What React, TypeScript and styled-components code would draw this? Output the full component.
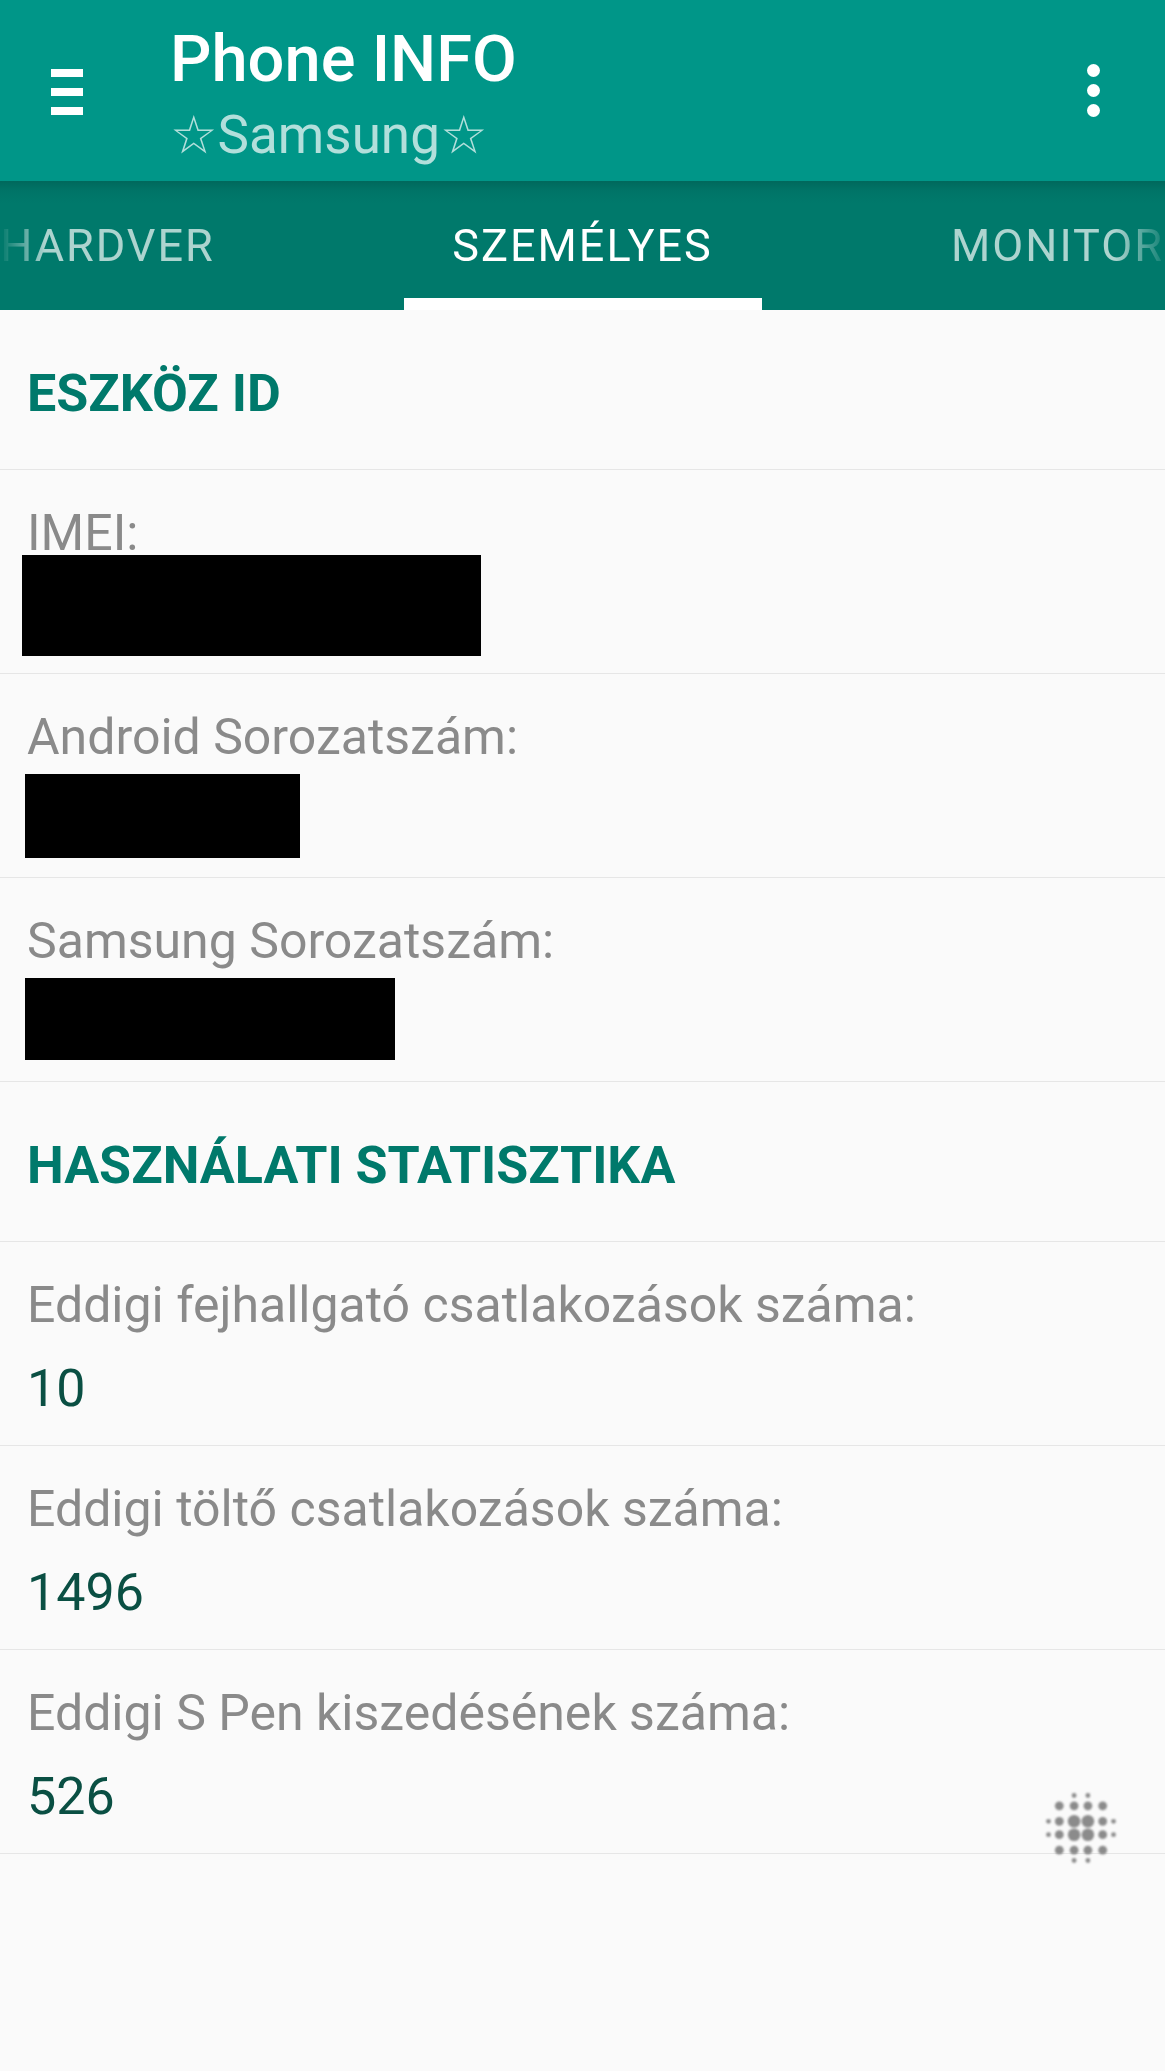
import React from "react";
import styled, { createGlobalStyle } from "styled-components";

const GlobalStyle = createGlobalStyle`
  *, *::before, *::after { box-sizing: border-box; }
  html, body { margin: 0; padding: 0; background: #fafafa; }
  body { font-family: Roboto, "DejaVu Sans", sans-serif; }
`;

const Page = styled.div`
  position: relative;
  width: 1165px;
  min-height: 2071px;
  background: #fafafa;
  overflow: hidden;
`;

const AppBar = styled.header`
  height: 181px;
  background: #009688;
  display: flex;
  align-items: flex-start;
  padding: 0 65px 0 51px;
`;

const NavIcon = styled.div`
  width: 32px;
  margin-top: 69px;
  display: flex;
  flex-direction: column;
  gap: 11px;
  flex: none;
`;

const NavBar = styled.span`
  display: block;
  height: 8px;
  background: #ffffff;
`;

const TitleBlock = styled.div`
  flex: 1;
  margin-left: 87px;
  padding-top: 21px;
`;

const Title = styled.div`
  font-family: Roboto, sans-serif;
  font-weight: 500;
  font-size: 65px;
  line-height: 76px;
  color: #ffffff;
  white-space: nowrap;
`;

const Subtitle = styled.div`
  margin-top: 8px;
  font-family: Roboto, "DejaVu Sans", sans-serif;
  font-size: 53px;
  line-height: 60px;
  color: #b2dfdb;
  white-space: nowrap;
`;

const MenuIcon = styled.div`
  flex: none;
  margin-top: 64px;
  display: flex;
  flex-direction: column;
  gap: 7px;
`;

const MenuDot = styled.span`
  display: block;
  width: 13px;
  height: 13px;
  border-radius: 50%;
  background: #ffffff;
`;

const TabBar = styled.nav`
  height: 129px;
  background: linear-gradient(#00685c 0px, #007467 10px, #00796b 22px, #00796b 100%);
  overflow: hidden;
`;

const TabStrip = styled.div`
  display: flex;
  height: 100%;
  margin-left: -130px;
  -webkit-mask-image: linear-gradient(to right, transparent 130px, #000 175px, #000 1245px, transparent 1300px);
  mask-image: linear-gradient(to right, transparent 130px, #000 175px, #000 1245px, transparent 1300px);
`;

const Tab = styled.div<{ $active?: boolean }>`
  position: relative;
  flex: none;
  width: 475px;
  display: flex;
  align-items: center;
  justify-content: center;
  font-family: Roboto, sans-serif;
  font-size: 45px;
  line-height: 53px;
  letter-spacing: 2px;
  color: ${(p) => (p.$active ? "#ffffff" : "rgba(255,255,255,0.68)")};
  white-space: nowrap;

  &::after {
    content: "";
    display: ${(p) => (p.$active ? "block" : "none")};
    position: absolute;
    left: 50%;
    bottom: 0;
    width: 358px;
    height: 12px;
    transform: translateX(-50%);
    background: #ffffff;
  }
`;

const List = styled.main`
  display: flex;
  flex-direction: column;
`;

const SectionHeader = styled.div`
  height: 160px;
  padding: 53px 27px 0;
  border-bottom: 1px solid #e6e6e6;
  font-family: Roboto, sans-serif;
  font-weight: 700;
  font-size: 52px;
  line-height: 61px;
  color: #00796b;
  white-space: nowrap;
`;

const Row = styled.div`
  height: 204px;
  padding: 33px 27px 0;
  border-bottom: 1px solid #e6e6e6;
`;

const Label = styled.div`
  font-family: Roboto, sans-serif;
  font-size: 50px;
  line-height: 60px;
  color: #8a8a8a;
  white-space: nowrap;
`;

const Value = styled.div`
  margin-top: 23px;
  font-family: Roboto, sans-serif;
  font-size: 52px;
  line-height: 61px;
  color: #0a4f43;
  white-space: nowrap;
`;

const Redacted = styled.div<{ $w: number; $h: number; $dx: number; $dy: number }>`
  width: ${(p) => p.$w}px;
  height: ${(p) => p.$h}px;
  margin-left: ${(p) => p.$dx}px;
  margin-top: ${(p) => p.$dy}px;
  background: #000000;
`;

const FloatingDots = styled.svg`
  position: absolute;
  left: 1040px;
  top: 1786px;
  width: 82px;
  height: 84px;
  opacity: 0.75;
`;

const redacted = [
  { label: "IMEI:", w: 459, h: 101, dx: -5, dy: -8 },
  { label: "Android Sorozatszám:", w: 275, h: 84, dx: -2, dy: 7 },
  { label: "Samsung Sorozatszám:", w: 370, h: 82, dx: -2, dy: 7 },
];

const stats = [
  { label: "Eddigi fejhallgató csatlakozások száma:", value: "10" },
  { label: "Eddigi töltő csatlakozások száma:", value: "1496" },
  { label: "Eddigi S Pen kiszedésének száma:", value: "526" },
];

const cx = 41;
const cy = 42;
const dots: { x: number; y: number; r: number }[] = [];
[-1, 1].forEach((sy) => {
  [-1, 1].forEach((sx) => {
    dots.push({ x: cx + sx * 6.9, y: cy + sy * 6.7, r: 6.3 });
    dots.push({ x: cx + sx * 21.7, y: cy + sy * 6.7, r: 4.4 });
    dots.push({ x: cx + sx * 32.5, y: cy + sy * 6.7, r: 2.4 });
    dots.push({ x: cx + sx * 6.9, y: cy + sy * 22.2, r: 4.4 });
    dots.push({ x: cx + sx * 21.7, y: cy + sy * 22.2, r: 4.4 });
    dots.push({ x: cx + sx * 6.9, y: cy + sy * 32.5, r: 2.4 });
  });
});

export default function App() {
  return (
    <>
      <GlobalStyle />
      <Page>
        <AppBar>
          <NavIcon>
            <NavBar />
            <NavBar />
            <NavBar />
          </NavIcon>
          <TitleBlock>
            <Title>Phone INFO</Title>
            <Subtitle>☆Samsung☆</Subtitle>
          </TitleBlock>
          <MenuIcon>
            <MenuDot />
            <MenuDot />
            <MenuDot />
          </MenuIcon>
        </AppBar>
        <TabBar>
          <TabStrip>
            <Tab>HARDVER</Tab>
            <Tab $active>SZEMÉLYES</Tab>
            <Tab>MONITOR</Tab>
          </TabStrip>
        </TabBar>
        <List>
          <SectionHeader>ESZKÖZ ID</SectionHeader>
          {redacted.map((r) => (
            <Row key={r.label}>
              <Label>{r.label}</Label>
              <Redacted $w={r.w} $h={r.h} $dx={r.dx} $dy={r.dy} />
            </Row>
          ))}
          <SectionHeader>HASZNÁLATI STATISZTIKA</SectionHeader>
          {stats.map((s) => (
            <Row key={s.label}>
              <Label>{s.label}</Label>
              <Value>{s.value}</Value>
            </Row>
          ))}
        </List>
        <FloatingDots viewBox="0 0 82 84">
          <defs>
            <filter id="soft" x="-20%" y="-20%" width="140%" height="140%">
              <feGaussianBlur stdDeviation="1.1" />
            </filter>
          </defs>
          <g fill="#666666" filter="url(#soft)">
            {dots.map((d, i) => (
              <circle key={i} cx={d.x} cy={d.y} r={d.r} />
            ))}
          </g>
        </FloatingDots>
      </Page>
    </>
  );
}
